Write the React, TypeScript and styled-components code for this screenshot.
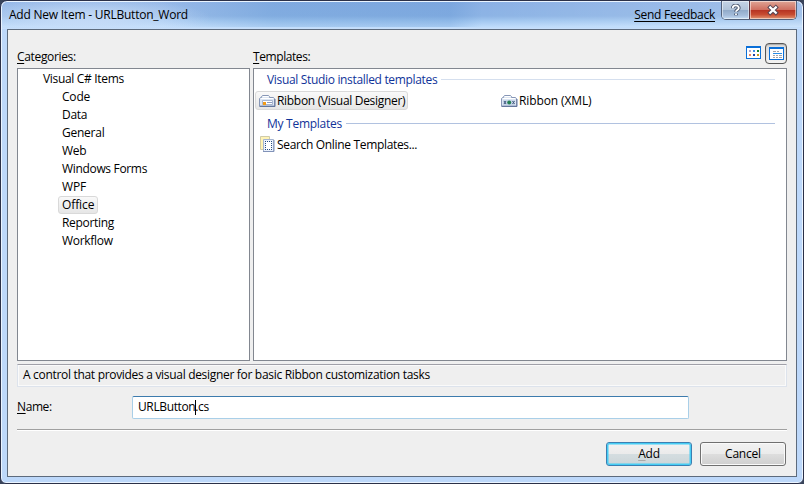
import React from 'react';
import styled, { createGlobalStyle, css } from 'styled-components';

const GlobalStyle = createGlobalStyle`
  * { box-sizing: border-box; }
  body { margin: 0; background: #39445a; overflow: hidden; }
`;

const Window = styled.div`
  width: 804px;
  height: 484px;
  display: flex;
  flex-direction: column;
  padding: 0 6px 6px;
  border: 1px solid #2b3048;
  border-radius: 7px 7px 6px 6px;
  font: 12px/18px 'Open Sans', 'Noto Sans', sans-serif;
  color: #000;
  white-space: nowrap;
  background:
    radial-gradient(ellipse 125px 20px at 85px 17px, rgba(200, 221, 248, 0.8) 25%, rgba(210, 228, 250, 0) 100%) 0 0 / 100% 28px no-repeat,
    linear-gradient(90deg, rgba(255, 255, 255, 0.1) 0 20%, rgba(86, 144, 205, 0.22) 34%, rgba(70, 130, 200, 0.22) 56%, rgba(255, 255, 255, 0) 60%, rgba(255, 255, 255, 0.2) 100%) 0 0 / 100% 26px no-repeat,
    linear-gradient(#8bb0e5 0, #8db4e5 15px, #a3c8f0 20px, #bfdcfb 26px, #c9e0fb 28px) 0 0 / 100% 28px no-repeat,
    #bdd8fa;
  box-shadow: inset 0 0 0 1px #eaf4ff;
`;

const TitleBar = styled.header`
  height: 28px;
  display: flex;
  align-items: flex-start;
  padding-left: 2px;
  flex: none;
`;

const Text = styled.span<{ $ls?: number }>`
  letter-spacing: ${(p) => p.$ls ?? -0.2}px;
`;

const Title = styled(Text)`
  flex: 1;
  padding-top: 5px;
`;

const Feedback = styled.a`
  margin: 5px 6px 0 0;
  letter-spacing: -0.26px;
  text-decoration: underline;
  text-underline-offset: 2px;
`;

const CaptionButtons = styled.div`
  display: flex;
  width: 76px;
  height: 19px;
  border: 1px solid #53617a;
  border-top: 0;
  border-radius: 0 0 5px 5px;
  overflow: hidden;
`;

const CaptionButton = styled.button<{ $close?: boolean }>`
  width: ${(p) => (p.$close ? 47 : 27)}px;
  height: 18px;
  padding: ${(p) => (p.$close ? 0 : '1px 0 0')};
  border: 0;
  display: grid;
  place-items: center;
  box-shadow: inset 0 0 0 1px rgba(255, 255, 255, 0.5);
  background: ${(p) =>
    p.$close
      ? 'linear-gradient(#dfa596 0, #cf6f60 48%, #b53222 50%, #c74c31 75%, #e29673 100%)'
      : 'linear-gradient(#c5d3e6 0, #b1c3d9 48%, #90a9c8 50%, #a6bddb 80%, #c5dcf3 100%)'};
  ${(p) => p.$close && css`border-left: 1px solid #5c3440;`}
`;

const Client = styled.main`
  flex: 1;
  border: 1px solid #5d6b7d;
  background: #efefef;
  padding: 0 9px;
  display: flex;
  flex-direction: column;
`;

const LabelRow = styled.div`
  height: 38px;
  display: grid;
  grid-template-columns: 236px 1fr auto;
  align-items: end;
`;

const Label = styled(Text)`
  padding-bottom: 2px;
`;

const Key = styled.span<{ $faint?: boolean }>`
  text-decoration: underline ${(p) => (p.$faint ? '#aaa' : '#000')};
  text-decoration-thickness: 1px;
  text-underline-offset: 2px;
`;

const ViewSwitch = styled.div`
  display: flex;
  gap: 3px;
  padding-bottom: 4px;
`;

const ViewButton = styled.button<{ $on?: boolean }>`
  width: ${(p) => (p.$on ? 22 : 17)}px;
  height: ${(p) => (p.$on ? 21 : 19)}px;
  padding: 0;
  display: grid;
  place-items: center;
  border: ${(p) => (p.$on ? '1px solid #555' : '0')};
  border-radius: 4px;
  background: ${(p) => (p.$on ? 'linear-gradient(#dadada, #f2f2f2)' : 'none')};
  box-shadow: ${(p) => (p.$on ? 'inset 0 1px 1px #aaa' : 'none')};
`;

const Lists = styled.div`
  display: grid;
  grid-template-columns: 233px 534px;
  gap: 3px;
  height: 293px;
`;

const Pane = styled.section`
  background: #fff;
  border: 1px solid #828790;
`;

const Tree = styled(Pane)`
  padding: 1px 0 0 40px;
  display: flex;
  flex-direction: column;
  align-items: flex-start;
`;

const selected = css`
  border: 1px solid #d9d9d9;
  border-radius: 3px;
  background: linear-gradient(#f9f9f9, #e6e6e6);
`;

const Node = styled.div<{ $root?: boolean; $selected?: boolean; $ls: number }>`
  height: 18px;
  line-height: 16px;
  margin-left: ${(p) => (p.$root ? -19 : 0)}px;
  padding: 0 3px;
  border: 1px solid transparent;
  letter-spacing: ${(p) => p.$ls}px;
  ${(p) => p.$selected && selected}
`;

const Templates = styled(Pane)`
  padding: 2px 11px 0 1px;
  display: flex;
  flex-direction: column;
`;

const GroupHeader = styled.div<{ $line: string; $ls: number }>`
  height: 17px;
  margin-left: 12px;
  display: flex;
  align-items: center;
  gap: 4px;
  color: #103399;
  letter-spacing: ${(p) => p.$ls}px;
  &::after {
    content: '';
    flex: 1;
    height: 1px;
    background: ${(p) => p.$line};
  }
`;

const Items = styled.div`
  display: grid;
  grid-template-columns: 242px 1fr;
  justify-items: start;
  padding: 3px 0 5px;
`;

const Item = styled.div<{ $selected?: boolean; $ls: number }>`
  height: 19px;
  padding: 0 2px 0 3px;
  border: 1px solid transparent;
  line-height: 17px;
  display: flex;
  align-items: center;
  gap: 1px;
  letter-spacing: ${(p) => p.$ls}px;
  ${(p) => p.$selected && selected}
`;

const Description = styled.div`
  margin-top: 3px;
  height: 23px;
  padding-left: 5px;
  line-height: 20px;
  border: 1px solid #dde3ec;
  border-top-color: #a0a0a8;
  box-shadow: inset 0 0 0 1px #fafafa;
  letter-spacing: -0.31px;
`;

const NameRow = styled.div`
  margin-top: 9px;
  display: flex;
  align-items: center;
  height: 23px;
`;

const NameLabel = styled(Text)`
  width: 115px;
  padding-bottom: 1px;
`;

const Field = styled.div`
  width: 557px;
  height: 23px;
  padding: 0 0 1px 5px;
  border: 1px solid #a9cfe8;
  border-top-color: #3d7bad;
  border-radius: 2px;
  background: #fff;
  display: flex;
  align-items: center;
  letter-spacing: -0.38px;
`;

const Caret = styled.i`
  width: 1px;
  height: 15px;
  margin-right: -1px;
  background: #000;
`;

const Rule = styled.hr`
  width: 100%;
  height: 2px;
  margin: 10px 0 11px;
  border: 0;
  border-top: 1px solid #a0a0a0;
  background: #fff;
`;

const Actions = styled.footer`
  display: flex;
  justify-content: flex-end;
  gap: 8px;
  padding-right: 1px;
`;

const Button = styled.button<{ $primary?: boolean }>`
  width: 86px;
  height: 24px;
  padding: 0;
  font: inherit;
  letter-spacing: -0.2px;
  border: 1px solid ${(p) => (p.$primary ? '#3c7fb1' : '#707070')};
  border-radius: 3px;
  background: linear-gradient(#f2f2f2 0, #ebebeb 48%, ${(p) => (p.$primary ? '#d4dde0 52%, #ccd5d8' : '#dddddd 52%, #cfcfcf')} 100%);
  box-shadow: inset 0 0 0 ${(p) => (p.$primary ? '1.5px #45cdf5' : '1px #fafafa')};
`;

const HelpIcon = () => (
  <svg width="12" height="13" viewBox="0 0 10 12" fill="none">
    <path d="M2 4V3.700a2.700 2.300 0 0 1 5.600 0c0 1.800-2.600 1.700-2.600 3.400M5 8.800v1.600" stroke="#4b566e" strokeWidth="3.400" />
    <path d="M2 4V3.700a2.700 2.300 0 0 1 5.600 0c0 1.800-2.600 1.700-2.600 3.400M5 8.800v1.400" stroke="#fff" strokeWidth="1.700" />
  </svg>
);

const CloseIcon = () => (
  <svg width="14" height="12" viewBox="0 0 14 12" strokeLinecap="square">
    <path d="m4.200 3.400 5.600 5.400M9.800 3.400 4.200 8.800" stroke="#574553" strokeWidth="4.200" />
    <path d="m4.200 3.400 5.600 5.400M9.800 3.400 4.200 8.800" stroke="#fff" strokeWidth="2.200" />
  </svg>
);

const dots: [number, number, string][] = [
  [3, 4, '#a9a2cf'], [7, 4, '#3f8ce8'], [11, 4, '#138535'],
  [3, 8, '#f2855e'], [7, 8, '#1d43a5'], [11, 8, '#c79b1d'],
];

const GridIcon = () => (
  <svg width="15" height="13" shapeRendering="crispEdges">
    <path d="M0 0h15v13H0z" fill="#0a6fd8" />
    <path d="M1 2h13v10H1z" fill="#fff" />
    {dots.map(([x, y, c]) => <path key={`${x}-${y}`} d={`M${x} ${y}h2v2h-2z`} fill={c} />)}
  </svg>
);

const DetailIcon = () => (
  <svg width="15" height="13" shapeRendering="crispEdges">
    <path d="M0 0h15v13H0z" fill="#0a6fd8" />
    <path d="M1 2h13v10H1z" fill="#fff" />
    <path d="M4 4.5h3M8 4.5h2M4 8.5h2M7 8.5h2M10 8.5h3M4 10.5h2M7 10.5h2M10 10.5h3" stroke="#a3a3a8" />
    <path d="M4 6.5h9" stroke="#288de8" />
  </svg>
);

const RibbonIcon = ({ xml }: { xml?: boolean }) => (
  <svg width="17" height="14" viewBox="0 0 17 14" fill="none">
    <path d="M.5 12V4.500l1-1h1v-1l1-1h6l1 1v1h4l1 1V12z" fill="#dce5f2" stroke="#8796b6" />
    <path d="M4 2.500h5.500M2 4.500h12" stroke="#fff" />
    <path d="M.5 12.500h15.500V5" stroke="#64769c" />
    {xml ? (
      <>
        <path d="M2 6h12v5H2z" fill="#c6d5e8" />
        <path d="m3 7 2 3M5 7 3 10M11.500 7l2 3M13.500 7l-2 3" stroke="#40587f" />
        <circle cx="8.200" cy="8.500" r="2" fill="#268054" />
      </>
    ) : (
      <>
        <path d="M3.500 6.500h10v4h-10z" fill="#fff" stroke="#a8b5cf" />
        <path d="M4 8h3v3H4z" fill="#f19a18" />
        <path d="M8 8.500h5" stroke="#8b9cc0" />
      </>
    )}
  </svg>
);

const SearchIcon = () => (
  <svg width="17" height="17" viewBox="0 0 17 17" fill="none">
    <path d="M1.500.5h9v13h-9z" fill="#fff3b5" stroke="#d0cba8" />
    <path d="M4.500 3.500h10v12h-10z" fill="#eaf1fc" stroke="#a5b4d0" />
    <path d="M6.500 5.500h6v8h-6z" fill="#fff" />
    <path d="M6 5.500h7M6 13.500h7M6.500 7v6M12.500 7v6" stroke="#294d83" strokeDasharray="1 1" />
    <path d="M4 15.500h11V4" stroke="#8192b8" />
  </svg>
);

const categories: { name: string; ls: number; root?: boolean; selected?: boolean }[] = [
  { name: 'Visual C# Items', ls: -0.32, root: true },
  { name: 'Code', ls: -0.2 },
  { name: 'Data', ls: -0.3 },
  { name: 'General', ls: -0.25 },
  { name: 'Web', ls: -0.25 },
  { name: 'Windows Forms', ls: -0.33 },
  { name: 'WPF', ls: -0.2 },
  { name: 'Office', ls: -0.1, selected: true },
  { name: 'Reporting', ls: -0.32 },
  { name: 'Workflow', ls: -0.3 },
];

export default function App() {
  return (
    <>
      <GlobalStyle />
      <Window>
        <TitleBar>
          <Title $ls={-0.23}>Add New Item - URLButton_Word</Title>
          <Feedback>Send Feedback</Feedback>
          <CaptionButtons>
            <CaptionButton aria-label="Help"><HelpIcon /></CaptionButton>
            <CaptionButton $close aria-label="Close"><CloseIcon /></CaptionButton>
          </CaptionButtons>
        </TitleBar>
        <Client>
          <LabelRow>
            <Label $ls={-0.34}><Key>C</Key>ategories:</Label>
            <Label $ls={-0.42}><Key>T</Key>emplates:</Label>
            <ViewSwitch>
              <ViewButton aria-label="Icons"><GridIcon /></ViewButton>
              <ViewButton $on aria-label="Details"><DetailIcon /></ViewButton>
            </ViewSwitch>
          </LabelRow>
          <Lists>
            <Tree>
              {categories.map((c) => (
                <Node key={c.name} $root={c.root} $selected={c.selected} $ls={c.ls}>{c.name}</Node>
              ))}
            </Tree>
            <Templates>
              <GroupHeader $line="#d5dfee" $ls={-0.33}>Visual Studio installed templates</GroupHeader>
              <Items>
                <Item $selected $ls={-0.31}><RibbonIcon />Ribbon (Visual Designer)</Item>
                <Item $ls={-0.12}><RibbonIcon xml />Ribbon (XML)</Item>
              </Items>
              <GroupHeader $line="#b1c2e0" $ls={-0.27}>My Templates</GroupHeader>
              <Items>
                <Item $ls={-0.33}><SearchIcon />Search Online Templates...</Item>
              </Items>
            </Templates>
          </Lists>
          <Description>A control that provides a visual designer for basic Ribbon customization tasks</Description>
          <NameRow>
            <NameLabel $ls={-0.4}><Key>N</Key>ame:</NameLabel>
            <Field>URLButton<Caret />.cs</Field>
          </NameRow>
          <Rule />
          <Actions>
            <Button $primary><Key $faint>A</Key>dd</Button>
            <Button>Cancel</Button>
          </Actions>
        </Client>
      </Window>
    </>
  );
}
